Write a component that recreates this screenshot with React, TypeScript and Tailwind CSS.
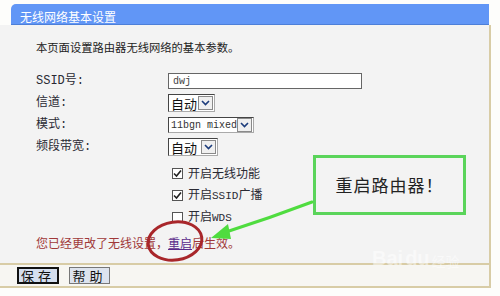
import React from 'react';

const mono = "font-['Liberation_Mono','Noto_Sans_CJK_SC',monospace]";
const cjk = "font-['Noto_Sans_CJK_SC','Liberation_Sans',sans-serif]";

const Arrow = () => (
  <span className="flex h-[14px] w-[15px] items-center justify-center border border-[#8a8a8a] bg-[#f0f0f0]">
    <svg width="9" height="6" viewBox="0 0 9 6">
      <path d="M1 1 L4.5 4.5 L8 1" stroke="#1c3c7c" strokeWidth="1.6" fill="none" />
    </svg>
  </span>
);

const Select: React.FC<{ text: string; w: string; small?: boolean; gap?: boolean }> = ({ text, w, small, gap }) => (
  <div
    className={`flex items-center justify-between border border-t-[#444] border-l-[#444] border-r-[#aaa] border-b-[#aaa] bg-white pl-[2px] pr-[1px] ${w} ${small ? 'h-[16px]' : 'h-[18px]'}`}
  >
    <span className={small ? `${mono} text-[10px] text-[#333]` : `${cjk} text-[13px] leading-none text-[#111]`}>{text}</span>
    {gap && <span className="flex-1" />}
    <Arrow />
  </div>
);

const Row: React.FC<{ label: string; children: React.ReactNode }> = ({ label, children }) => (
  <div className="flex h-[22px] items-center">
    <span className={`w-[132px] ${mono} text-[12px] text-[#2a2a33]`}>{label}</span>
    {children}
  </div>
);

const Check: React.FC<{ on?: boolean; label: React.ReactNode }> = ({ on, label }) => (
  <div className="flex h-[22px] items-center pl-[136px]">
    <span className="flex h-[11px] w-[11px] items-center justify-center border border-[#555] bg-white">
      {on && (
        <svg width="9" height="9" viewBox="0 0 9 9">
          <path d="M1 4.5 L3.5 7 L8 1.5" stroke="#222" strokeWidth="1.6" fill="none" />
        </svg>
      )}
    </span>
    <span className={`ml-[5px] ${cjk} text-[12px] text-[#2a2a33]`}>{label}</span>
  </div>
);

export default function App() {
  return (
    <div className="relative h-[296px] w-[500px] overflow-hidden bg-[#fdfdfb]">
      {/* 标题栏 */}
      <div className="ml-[11px] mt-[4px] h-[21px] w-[478px] rounded-tl-[5px] border-b border-[#4d7fd8] bg-[#6196f6] pl-[9px]">
        <span className={`${cjk} text-[12px] leading-[20px] text-white`}>无线网络基本设置</span>
      </div>

      {/* 主体 */}
      <div className="h-[238px] w-[491px] border-r-2 border-[#d8cca6] bg-[#f3f3f3] pl-[36px] pt-[14px]">
        <div className={`${cjk} h-[16px] text-[11.3px] leading-[16px] text-[#222]`}>本页面设置路由器无线网络的基本参数。</div>
        <div className="mt-[15px]">
          <Row label="SSID号:">
            <div className="flex h-[16px] w-[194px] items-center border border-[#666] bg-white pl-[4px]">
              <span className={`${mono} text-[10px] text-[#444]`}>dwj</span>
            </div>
          </Row>
          <Row label="信道:">
            <Select text="自动" w="w-[47px]" />
          </Row>
          <Row label="模式:">
            <Select text="11bgn mixed" w="w-[86px]" small />
          </Row>
          <Row label="频段带宽:">
            <Select text="自动" w="w-[50px]" gap />
          </Row>
        </div>
        <div className="mt-[4px]">
          <Check on label="开启无线功能" />
          <Check on label={<>开启<span className={`${mono} text-[11px]`}>SSID</span>广播</>} />
          <Check label={<>开启<span className={`${mono} text-[11px]`}>WDS</span></>} />
        </div>
        <div className={`mt-[7px] h-[16px] ${cjk} text-[12px] leading-[16px] text-[#a03838]`}>
          您已经更改了无线设置，<span className="text-[#5a2a8a] underline">重启</span>后生效。
        </div>
      </div>

      {/* 按钮栏 */}
      <div className="flex h-[25px] w-[491px] items-center gap-[10px] border-b-2 border-r-2 border-t-2 border-[#d8cca6] bg-[#f7f6f2] pl-[17px]">
        <button className={`h-[17px] w-[42px] border-2 border-[#111] bg-[#d4deee] ${cjk} text-[13px] leading-none tracking-[4px] text-[#111]`}>
          保存
        </button>
        <button className={`h-[17px] w-[41px] border border-[#777] bg-[#dde3ee] ${cjk} text-[13px] leading-none tracking-[4px] text-[#111]`}>
          帮助
        </button>
      </div>

      {/* 标注框 */}
      <div className="absolute left-[313px] top-[155px] flex h-[60px] w-[153px] items-center justify-center border-[3px] border-[#5ad45a]">
        <span className={`${cjk} text-[17px] tracking-[1px] text-[#222]`}>重启路由器！</span>
      </div>

      {/* 标注箭头和圈 */}
      <svg className="absolute left-0 top-0" width="500" height="296" viewBox="0 0 500 296">
        <path d="M312 202 Q270 218 226 232" stroke="#4fdc3f" strokeWidth="3" fill="none" strokeLinecap="round" />
        <path d="M211 238 L228 224 L231 239 Z" fill="#4fdc3f" />
        <ellipse cx="175" cy="241" rx="27" ry="19" transform="rotate(-8 175 241)" stroke="#a8262a" strokeWidth="3" fill="none" />
      </svg>

      {/* 水印 */}
      <div className="absolute left-[372px] top-[248px] flex items-end gap-[2px] text-white/50">
        <span className="font-['Liberation_Sans',sans-serif] text-[20px] font-bold leading-none">Bai</span>
        <span className="font-['Liberation_Sans',sans-serif] text-[20px] font-bold leading-none">du</span>
        <span className={`${cjk} text-[14px] leading-none`}>经验</span>
      </div>
    </div>
  );
}
